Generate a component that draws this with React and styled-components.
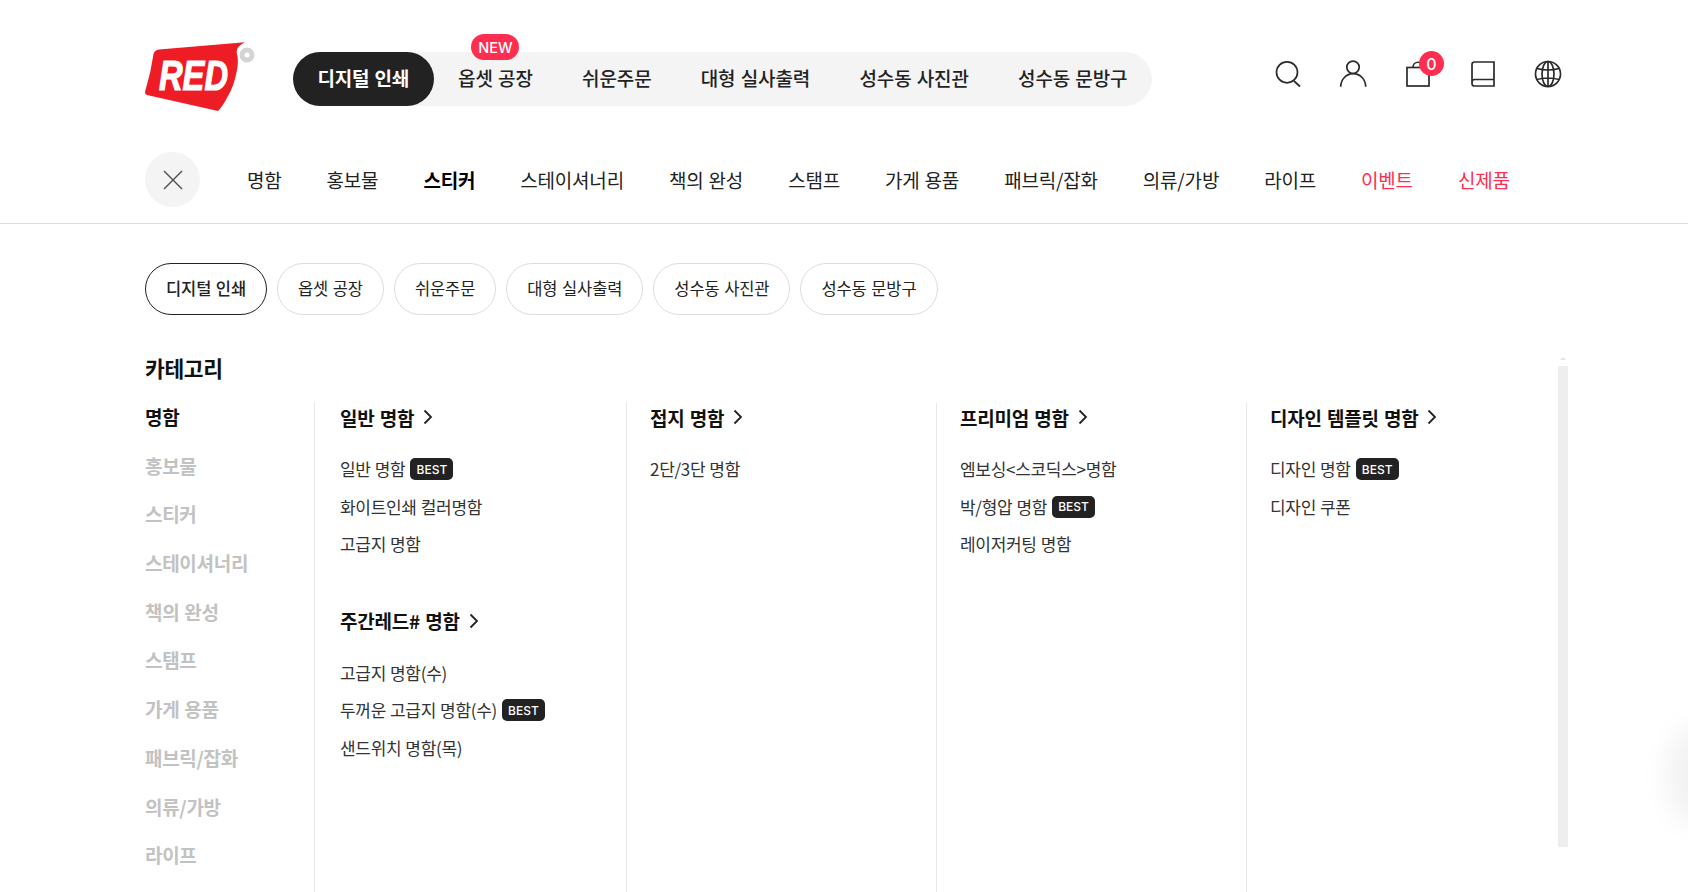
import styled, { createGlobalStyle } from 'styled-components'

const GlobalStyle = createGlobalStyle`
  html, body { margin: 0; padding: 0; background: #fff; }
  body { font-family: "Noto Sans CJK KR", "Noto Sans", sans-serif; color: #222; overflow: hidden; }
  * { box-sizing: border-box; }
`

const Page = styled.div`
  width: 1688px;
  height: 892px;
  overflow: hidden;
  position: relative;
`

const Header = styled.header`
  height: 140px;
  padding: 42px 0 0 145px;
  display: flex;
  align-items: flex-start;
`

const Logo = styled.svg`
  width: 111px;
  height: 70px;
  flex: none;
`

const LogoText = styled.text`
  font-family: "Liberation Sans", sans-serif;
  font-weight: 700;
  font-style: italic;
  font-size: 43px;
  fill: #fff;
  stroke: #fff;
  stroke-width: 1.2;
`

const PillNav = styled.nav`
  margin: 10px 0 0 37px;
  height: 54px;
  border-radius: 27px;
  background: #f4f4f4;
  display: flex;
  align-items: center;
`

const PillItem = styled.a`
  position: relative;
  height: 54px;
  padding: 0 ${p => (p.$active ? '24.5px' : '24.6px')} 3px;
  border-radius: 27px;
  display: flex;
  align-items: center;
  font-size: 19px;
  font-weight: ${p => (p.$active ? 700 : 500)};
  letter-spacing: ${p => (p.$active ? '-0.2px' : '-0.1px')};
  word-spacing: 1px;
  color: ${p => (p.$active ? '#fff' : '#222')};
  background: ${p => (p.$active ? '#222' : 'transparent')};
`

const NewBadge = styled.span`
  position: absolute;
  top: -18px;
  left: 50%;
  transform: translateX(-50%);
  width: 48px;
  height: 26px;
  border-radius: 13px;
  background: #ff2d4f;
  color: #fff;
  font-family: Inter, sans-serif;
  font-size: 14.5px;
  font-weight: 500;
  letter-spacing: 0;
  word-spacing: 0;
  display: flex;
  align-items: center;
  justify-content: center;
`

const IconBar = styled.div`
  margin: 18px 0 0 auto;
  padding-right: 126px;
  display: flex;
  gap: 37px;
`

const IconWrap = styled.div`
  position: relative;
  width: 28px;
  height: 28px;
`

const Icon = styled.svg`
  width: 28px;
  height: 28px;
  fill: none;
  stroke: #2b2b2b;
  stroke-width: 1.7;
  display: block;
`

const CartCount = styled.span`
  position: absolute;
  top: -9px;
  right: -12px;
  width: 25px;
  height: 25px;
  border-radius: 50%;
  background: #ff2d4f;
  color: #fff;
  font-family: Inter, sans-serif;
  font-size: 16px;
  font-weight: 500;
  display: flex;
  align-items: center;
  justify-content: center;
`

const CategoryBar = styled.div`
  height: 84px;
  padding: 12px 0 0 145px;
  border-bottom: 1px solid #ddd;
  display: flex;
  align-items: flex-start;
`

const CloseButton = styled.button`
  width: 55px;
  height: 55px;
  flex: none;
  padding: 0;
  border: none;
  border-radius: 50%;
  background: #f4f4f4;
  display: flex;
  align-items: center;
  justify-content: center;
`

const CategoryList = styled.div`
  margin-left: 47px;
  height: 55px;
  display: flex;
  align-items: center;
  gap: 45px;
`

const CategoryLink = styled.a`
  font-size: 19px;
  letter-spacing: -0.2px;
  word-spacing: 1px;
  font-weight: ${p => (p.$bold ? 700 : 400)};
  color: ${p => (p.$accent ? '#ff2d4f' : p.$bold ? '#000' : '#222')};
`

const ChipRow = styled.div`
  padding: 39px 0 0 145px;
  display: flex;
  gap: 10px;
`

const Chip = styled.a`
  height: 52px;
  padding: 0 20px 2px;
  border-radius: 26px;
  border: 1px solid ${p => (p.$active ? '#222' : '#ddd')};
  display: flex;
  align-items: center;
  font-size: 16.5px;
  letter-spacing: -0.1px;
  word-spacing: 1px;
  font-weight: ${p => (p.$active ? 500 : 400)};
  color: #222;
`

const SectionTitle = styled.h2`
  margin: 37px 0 0 145px;
  height: 32px;
  line-height: 32px;
  font-size: 21.5px;
  font-weight: 700;
  letter-spacing: -0.4px;
  color: #111;
`

const Columns = styled.div`
  margin: 19px 0 0 145px;
  display: flex;
  height: 540px;
`

const Sidebar = styled.div`
  width: 169px;
  flex: none;
  display: flex;
  flex-direction: column;
`

const SideItem = styled.a`
  flex: none;
  height: 48.7px;
  line-height: 28px;
  font-size: 19px;
  letter-spacing: -0.3px;
  word-spacing: 1px;
  font-weight: 700;
  color: ${p => (p.$active ? '#111' : '#c2c2c2')};
`

const Column = styled.div`
  width: ${p => (p.$first ? '312px' : '310px')};
  flex: none;
  padding-left: ${p => (p.$first ? '25px' : '23px')};
  border-left: 1px solid #e8e8e8;
`

const GroupTitle = styled.h3`
  margin: 0 0 19px;
  height: 28px;
  display: flex;
  align-items: center;
  gap: 9px;
  font-size: 19px;
  font-weight: 700;
  letter-spacing: -0.2px;
  word-spacing: 1px;
  color: #111;
`

const Chevron = styled.svg`
  width: 10px;
  height: 16px;
  fill: none;
  stroke: #222;
  stroke-width: 1.8;
`

const Group = styled.div`
  margin-bottom: 44px;
`

const SubItem = styled.div`
  height: 37.5px;
  display: flex;
  align-items: center;
  gap: 5px;
  font-size: 17px;
  letter-spacing: -0.3px;
  word-spacing: 0.5px;
  color: #333;
`

const BestTag = styled.span`
  width: 43px;
  height: 22px;
  margin-top: 1px;
  border-radius: 5px;
  background: #222;
  color: #fff;
  font-family: Inter, sans-serif;
  font-size: 12px;
  font-weight: 500;
  letter-spacing: 0;
  display: flex;
  align-items: center;
  justify-content: center;
`

const ScrollTrack = styled.div`
  position: absolute;
  left: 1558px;
  top: 366px;
  width: 10px;
  height: 481px;
  background: #eee;
`

const ScrollArrow = styled.div`
  position: absolute;
  left: 1560px;
  top: 357px;
  width: 0;
  height: 0;
  border-left: 3px solid transparent;
  border-right: 3px solid transparent;
  border-bottom: 3px solid #e4e4e4;
`

const EdgeGlow = styled.div`
  position: absolute;
  right: -48px;
  top: 725px;
  width: 70px;
  height: 100px;
  border-radius: 50%;
  background: rgba(0, 0, 0, 0.05);
  filter: blur(12px);
`

const topMenu = ['옵셋 공장', '쉬운주문', '대형 실사출력', '성수동 사진관', '성수동 문방구']
const categories = ['명함', '홍보물', '스티커', '스테이셔너리', '책의 완성', '스탬프', '가게 용품', '패브릭/잡화', '의류/가방', '라이프']

const columns = [
  [
    { title: '일반 명함', items: [['일반 명함', true], ['화이트인쇄 컬러명함'], ['고급지 명함']] },
    { title: '주간레드# 명함', items: [['고급지 명함(수)'], ['두꺼운 고급지 명함(수)', true], ['샌드위치 명함(목)']] },
  ],
  [{ title: '접지 명함', items: [['2단/3단 명함']] }],
  [{ title: '프리미엄 명함', items: [['엠보싱<스코딕스>명함'], ['박/형압 명함', true], ['레이저커팅 명함']] }],
  [{ title: '디자인 템플릿 명함', items: [['디자인 명함', true], ['디자인 쿠폰']] }],
]

function App() {
  return (
    <Page>
      <GlobalStyle />
      <Header>
        <Logo viewBox="0 0 111 70">
          <path d="M8.500 12 Q9.500 8 14 7.500 L100 0.300 Q92 4 91.500 10 Q94 18 92 28 Q89 44 83 54 Q78 64 73 69 L2 53 Q-1 52 0.500 48 Q6 30 8.500 12 Z" fill="#ee1c25" />
          <LogoText x="14" y="48" textLength="69" lengthAdjust="spacingAndGlyphs">RED</LogoText>
          <circle cx="102" cy="13" r="5" fill="none" stroke="#d4d4d4" strokeWidth="5" />
        </Logo>
        <PillNav>
          <PillItem $active>디지털 인쇄</PillItem>
          {topMenu.map((m, i) => (
            <PillItem key={m}>
              {i === 0 && <NewBadge>NEW</NewBadge>}
              {m}
            </PillItem>
          ))}
        </PillNav>
        <IconBar>
          <IconWrap>
            <Icon viewBox="0 0 28 28"><circle cx="13" cy="12.300" r="10.500" /><path d="M20 21 L26 26.500" /></Icon>
          </IconWrap>
          <IconWrap>
            <Icon viewBox="0 0 28 28"><circle cx="14" cy="7.300" r="6.200" /><path d="M1.700 26.700 A12.500 13 0 0 1 26.700 26.700" /></Icon>
          </IconWrap>
          <IconWrap>
            <Icon viewBox="0 0 28 28"><rect x="3" y="7.500" width="22" height="18.500" /><path d="M9 7.500 C9 0.500 19 0.500 19 7.500" /></Icon>
            <CartCount>0</CartCount>
          </IconWrap>
          <IconWrap>
            <Icon viewBox="0 0 28 28"><path d="M5.500 2 H25 V26 H5.500 Q3 26 3 23.500 V4.500 Q3 2 5.500 2 Z M3 22 Q3 19.500 5.500 19.500 H25" /></Icon>
          </IconWrap>
          <IconWrap>
            <Icon viewBox="0 0 28 28"><circle cx="14" cy="14" r="12.500" /><ellipse cx="14" cy="14" rx="6" ry="12.500" /><path d="M14 1.500 V26.500 M3 8.500 Q14 11.500 25 8.500 M3 19.500 Q14 16.500 25 19.500" /></Icon>
          </IconWrap>
        </IconBar>
      </Header>

      <CategoryBar>
        <CloseButton>
          <svg width="20" height="20" viewBox="0 0 20 20" fill="none" stroke="#555" strokeWidth="1.500"><path d="M1 1 L19 19 M19 1 L1 19" /></svg>
        </CloseButton>
        <CategoryList>
          {categories.map(c => (
            <CategoryLink key={c} $bold={c === '스티커'}>{c}</CategoryLink>
          ))}
          <CategoryLink $accent>이벤트</CategoryLink>
          <CategoryLink $accent>신제품</CategoryLink>
        </CategoryList>
      </CategoryBar>

      <ChipRow>
        <Chip $active>디지털 인쇄</Chip>
        {topMenu.map(m => <Chip key={m}>{m}</Chip>)}
      </ChipRow>

      <SectionTitle>카테고리</SectionTitle>
      <Columns>
        <Sidebar>
          {categories.map((c, i) => <SideItem key={c} $active={i === 0}>{c}</SideItem>)}
        </Sidebar>
        {columns.map((col, i) => (
          <Column key={col[0].title} $first={i === 0}>
            {col.map(g => (
              <Group key={g.title}>
                <GroupTitle>
                  {g.title}
                  <Chevron viewBox="0 0 10 16"><path d="M1.500 1.500 L8 8 L1.500 14.500" /></Chevron>
                </GroupTitle>
                {g.items.map(([label, best]) => (
                  <SubItem key={label}>
                    {label}
                    {best && <BestTag>BEST</BestTag>}
                  </SubItem>
                ))}
              </Group>
            ))}
          </Column>
        ))}
      </Columns>

      <ScrollArrow />
      <ScrollTrack />
      <EdgeGlow />
    </Page>
  )
}

export default App
